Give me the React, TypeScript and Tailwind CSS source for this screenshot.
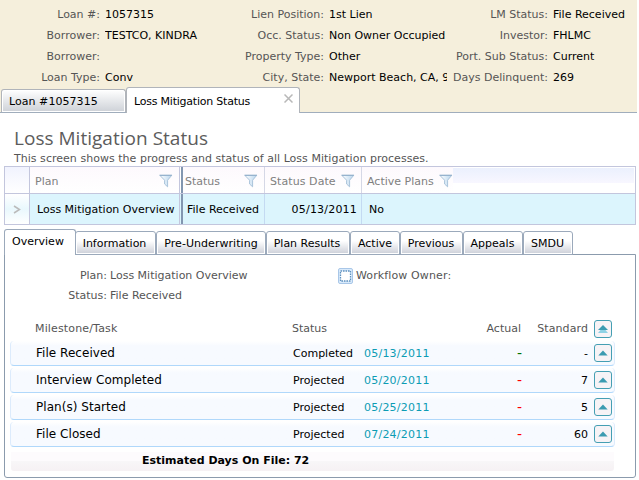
import React from "react";

type Pair = { label: string; value: string };

function InfoColumn({ pairs, labelWidth, valueWidth }: { pairs: Pair[]; labelWidth: string; valueWidth: string }) {
  return (
    <div className="flex flex-col">
      {pairs.map((p, i) => (
        <div key={i} className="flex h-[21px] items-center">
          <div className={`${labelWidth} whitespace-nowrap text-right text-[#555]`}>{p.label}</div>
          <div className={`${valueWidth} ml-[5px] overflow-hidden whitespace-nowrap text-black`}>{p.value}</div>
        </div>
      ))}
    </div>
  );
}

function Funnel({ className = "" }: { className?: string }) {
  return (
    <svg width="14" height="14" viewBox="0 0 14 14" className={`shrink-0 ${className}`}>
      <defs>
        <linearGradient id="funnel" x1="0" y1="0" x2="1" y2="0">
          <stop offset="0" stopColor="#ffffff" />
          <stop offset="1" stopColor="#b9d6ee" />
        </linearGradient>
      </defs>
      <path d="M1 1.5H12.6L8.6 6.2V12.8L5.6 10V6.2Z" fill="url(#funnel)" stroke="#a9c3da" strokeWidth="1" />
      <path d="M0.5 1.2H13" stroke="#8fadc9" />
    </svg>
  );
}

function ArrowButton({ double = false }: { double?: boolean }) {
  return (
    <div className="flex h-[18px] w-[18px] shrink-0 items-center justify-center rounded-[3px] border border-[#459fb3] bg-[#f7f3f6]">
      <svg width="10" height="10" viewBox="0 0 10 10">
        {double && <path d="M5 3L10 9H0Z" fill="#8fd2e5" />}
        {double ? <path d="M5 1L10 6H0Z" fill="#3c9bb1" /> : <path d="M5 2.5L9.7 7.5H0.3Z" fill="#3c9bb1" />}
      </svg>
    </div>
  );
}

const tabs = [
  { name: "Information", w: "w-[81px]", t: "pr-[2px]" },
  { name: "Pre-Underwriting", w: "w-[110px]", t: "tracking-[0.05px]" },
  { name: "Plan Results", w: "w-[84px]", t: "pr-[2px]" },
  { name: "Active", w: "w-[50px]", t: "" },
  { name: "Previous", w: "w-[63px]", t: "pr-[1px]" },
  { name: "Appeals", w: "w-[60px]", t: "pr-[1px]" },
  { name: "SMDU", w: "w-[50px]", t: "pr-[1px]" },
];

const rows = [
  { task: "File Received", status: "Completed", date: "05/13/2011", color: "text-[#007000]", std: "-" },
  { task: "Interview Completed", status: "Projected", date: "05/20/2011", color: "text-[#f00]", std: "7" },
  { task: "Plan(s) Started", status: "Projected", date: "05/25/2011", color: "text-[#f00]", std: "5" },
  { task: "File Closed", status: "Projected", date: "07/24/2011", color: "text-[#f00]", std: "60" },
];

export default function App() {
  return (
    <div className="flex h-[480px] w-[639px] flex-col overflow-hidden bg-white font-['Verdana','DejaVu_Sans',sans-serif] text-[11px] leading-[14px] text-black">
      <header className="flex h-[113px] w-[637px] shrink-0 flex-col justify-between border-b border-[#a0adbc] bg-[#f5efdc] pt-[4px]">
        <div className="flex">
          <InfoColumn
            labelWidth="w-[100px]"
            valueWidth="w-[123px]"
            pairs={[
              { label: "Loan #:", value: "1057315" },
              { label: "Borrower:", value: "TESTCO, KINDRA" },
              { label: "Borrower:", value: "" },
              { label: "Loan Type:", value: "Conv" },
            ]}
          />
          <InfoColumn
            labelWidth="w-[96px]"
            valueWidth="w-[118px]"
            pairs={[
              { label: "Lien Position:", value: "1st Lien" },
              { label: "Occ. Status:", value: "Non Owner Occupied" },
              { label: "Property Type:", value: "Other" },
              { label: "City, State:", value: "Newport Beach, CA, 9" },
            ]}
          />
          <InfoColumn
            labelWidth="w-[101px]"
            valueWidth="w-[84px]"
            pairs={[
              { label: "LM Status:", value: "File Received" },
              { label: "Investor:", value: "FHLMC" },
              { label: "Port. Sub Status:", value: "Current" },
              { label: "Days Delinquent:", value: "269" },
            ]}
          />
        </div>
        <div className="-mt-[1px] -mb-[1px] flex items-end pl-[1px]">
          <div className="mb-[1px] flex h-[23px] w-[125px] items-center rounded-t-[3px] border border-b-0 border-[#b0b4ba] bg-linear-to-b from-white to-[#cdd1d7] pt-[1px] pl-[7px] tracking-[0.05px] shadow-[inset_0_0_0_1px_white]">
            Loan #1057315
          </div>
          <div className="flex h-[26px] w-[174px] items-center justify-between rounded-t-[3px] border border-b-0 border-[#b0b4ba] bg-white pr-[6px] pl-[7px]">
            <span className="pt-[2px] tracking-[-0.22px]">Loss Mitigation Status</span>
            <svg width="9" height="9" viewBox="0 0 9 9" className="mb-[4px]">
              <path d="M0.5 0.5L8.5 8.5M8.5 0.5L0.5 8.5" stroke="#b8b8b8" strokeWidth="1.5" />
            </svg>
          </div>
        </div>
      </header>

      <main className="flex w-[637px] flex-col pl-[4px]">
        <h1 className="mt-[12px] mb-[1px] h-[26px] pl-[10px] font-['Open_Sans',sans-serif] text-[19px] leading-[26px] font-normal tracking-[0.02px] text-[#5c5c5c]">Loss Mitigation Status</h1>
        <p className="h-[14px] pl-[10px] tracking-[0.03px] text-[#555]">This screen shows the progress and status of all Loss Mitigation processes.</p>

        <section className="flex h-[59px] w-[632px] flex-col border border-[#c3c6dd]">
          <div className="flex h-[27px] border-b border-[#c3c6dd] text-[#808080]">
            <div className="w-[25px] border-r border-[#c3c6dd] bg-linear-to-b from-[#f1f3fe] to-white" />
            <div className="flex w-[150px] items-center justify-between border-r border-[#c3c6dd] bg-linear-to-b from-[#fdf9fd] to-white pt-[3px] pr-[5px] pl-[5px]">
              Plan<Funnel className="mr-[1px] mb-[1px]" />
            </div>
            <div className="ml-[1px] flex w-[84px] items-center justify-between border-r border-l-2 border-r-[#d5d8e6] border-l-[#8296b0] bg-linear-to-b from-[#fdf9fd] to-white pt-[3px] pr-[6px] pl-[2px]">
              Status<Funnel className="mb-[1px]" />
            </div>
            <div className="flex w-[97px] items-center justify-between border-r border-[#d5d8e6] bg-linear-to-b from-[#fdf9fd] to-white pt-[3px] pr-[6px] pl-[5px]">
              <span className="tracking-[0.08px]">Status Date</span><Funnel className="mb-[1px]" />
            </div>
            <div className="flex w-[91px] items-center justify-between bg-linear-to-b from-[#fdf9fd] to-white pt-[3px] pl-[5px]">
              Active Plans<Funnel className="mb-[1px]" />
            </div>
            <div className="mt-[1px] mr-[1px] h-[15px] flex-1 bg-linear-to-b from-[#ebf0fd] to-[#f8f7ff]" />
          </div>
          <div className="flex h-[30px] items-stretch bg-[#dcf5fd]">
            <div className="flex w-[25px] items-center justify-center border-r border-[#c3c6dd] bg-linear-to-b from-white via-[#e9f8fd] to-white">
              <svg width="8" height="9" viewBox="0 0 8 9"><path d="M1 1L6.5 4.5L1 8" fill="none" stroke="#bbb" strokeWidth="1.5" /></svg>
            </div>
            <div className="flex w-[150px] items-center border-r border-[#c3c6dd] pt-[1px] pl-[7px]">Loss Mitigation Overview</div>
            <div className="ml-[1px] flex w-[84px] items-center border-r border-l-2 border-r-[#c4daf2] border-l-[#8296b0] pt-[1px] pl-[4px]">File Received</div>
            <div className="flex w-[97px] items-center justify-end border-r border-[#c4daf2] pt-[1px] pr-[4px] tracking-[0.2px]">05/13/2011</div>
            <div className="flex items-center pt-[1px] pl-[7px]">No</div>
          </div>
        </section>

        <nav className="z-10 mt-[4px] -mb-[1px] flex h-[26px] items-end">
          <div className="flex h-[26px] w-[72px] items-center justify-center rounded-t-[3px] border border-b-0 border-[#9ba9bb] bg-white pr-[4px] pb-[1px]">Overview</div>
          {tabs.map((t) => (
            <div key={t.name} className={`${t.w} ${t.t} -ml-[1px] mr-[1px] flex h-[24px] items-center justify-center rounded-t-[3px] border border-[#9ba9bb] bg-linear-to-b from-white from-40% to-[#cccfd8] pt-[1px] shadow-[inset_0_0_0_1px_white] last:mr-0`}>
              {t.name}
            </div>
          ))}
        </nav>
        <section className="flex h-[224px] w-[632px] flex-col rounded-b-[3px] border border-[#8b9bad] bg-white pt-[14px] pl-[5px]">
          <div className="flex h-[50px] text-[#555]">
            <div className="flex w-[328px] flex-col">
              <div className="flex h-[20px]"><span className="w-[97px] text-right">Plan:</span><span className="ml-[3px]">Loss Mitigation Overview</span></div>
              <div className="flex h-[20px]"><span className="w-[97px] text-right">Status:</span><span className="ml-[3px]">File Received</span></div>
            </div>
            <div className="flex h-[13px] items-center">
              <div className="flex h-[16px] w-[15px] items-center justify-center rounded-[2px] border border-[#a9c7e8] bg-[#d9eafb]">
                <svg width="13" height="12" viewBox="0 0 13 12"><rect x="1.5" y="1" width="10" height="10" fill="white" stroke="#5f91bf" strokeWidth="1.3" strokeDasharray="1.6 0.9" /></svg>
              </div>
              <span className="ml-[3px] tracking-[0.12px]">Workflow Owner:</span>
            </div>
          </div>
          <div className="mb-[3px] flex h-[19px] items-center text-[#555]">
            <span className="w-[282px] pl-[25px] tracking-[0.15px]">Milestone/Task</span>
            <span className="w-[163px]">Status</span>
            <span className="w-[66px] text-right">Actual</span>
            <span className="w-[67px] text-right tracking-[0.1px]">Standard</span>
            <span className="ml-[6px]"><ArrowButton double /></span>
          </div>
          {rows.map((r) => (
            <div key={r.task} className="mb-[2px] flex h-[25px] w-[605px] items-center rounded-[4px] border-x border-b border-x-[#dcebfc] border-b-[#b0d8fb] bg-linear-to-b from-white via-[#f7faff] via-20% to-[#f7faff]">
              <span className="w-[282px] pl-[25px] text-[12px] tracking-[0.04px]">{r.task}</span>
              <span className="w-[71px] pt-[1px]">{r.status}</span>
              <span className="w-[92px] pt-[1px] tracking-[0.23px] text-[#0c9cb4]">{r.date}</span>
              <span className={`w-[66px] text-right text-[14px] ${r.color}`}>-</span>
              <span className="w-[66px] pt-[1px] text-right">{r.std}</span>
              <span className="ml-[6px]"><ArrowButton /></span>
            </div>
          ))}
          <div className="mt-[3px] ml-[1px] h-[19px] w-[603px] rounded-b-[3px] bg-linear-to-b from-[#fdfbfd] from-45% via-[#f8f7f8] via-46% to-[#f6f1f4] pl-[131px] leading-[18px] font-bold">
            Estimated Days On File: 72
          </div>
        </section>
      </main>
    </div>
  );
}
